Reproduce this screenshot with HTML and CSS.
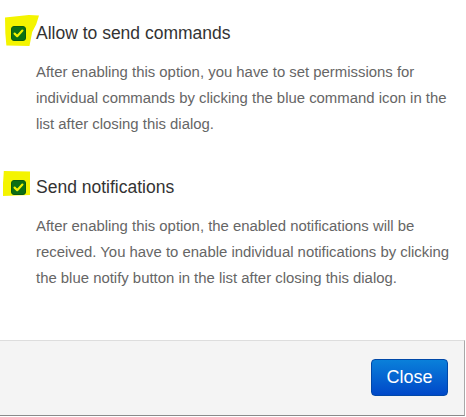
FILE: index.html
```html
<!DOCTYPE html>
<html>
<head>
<meta charset="utf-8">
<link rel="stylesheet" href="styles.css">
</head>
<body>
<div class="dialog">
  <div class="content">
    <div class="section">
      <label class="title">
        <span class="mark mark-a"></span>
        <span class="check"><svg viewBox="0 0 15 15" width="15" height="15"><path d="M3.6 7.6 L6.2 10.2 L11.4 4.6" fill="none" stroke="#f2f200" stroke-width="2.2" stroke-linecap="round" stroke-linejoin="round"/></svg></span>
        <span class="label">Allow to send commands</span>
      </label>
      <p class="desc">After enabling this option, you have to set permissions for individual commands by clicking the blue command icon in the list after closing this dialog.</p>
    </div>
    <div class="section">
      <label class="title">
        <span class="mark mark-b"></span>
        <span class="check"><svg viewBox="0 0 15 15" width="15" height="15"><path d="M3.6 7.6 L6.2 10.2 L11.4 4.6" fill="none" stroke="#f2f200" stroke-width="2.2" stroke-linecap="round" stroke-linejoin="round"/></svg></span>
        <span class="label">Send notifications</span>
      </label>
      <p class="desc">After enabling this option, the enabled notifications will be received. You have to enable individual notifications by clicking the blue notify button in the list after closing this dialog.</p>
    </div>
  </div>
  <div class="footer">
    <button class="close">Close</button>
  </div>
</div>
</body>
</html>
```
FILE: styles.css
```css
html, body {
  margin: 0;
  padding: 0;
  background: #ffffff;
}
body {
  font-family: "Liberation Sans", Arial, sans-serif;
  width: 466px;
  height: 417px;
  overflow: hidden;
}
.dialog {
  display: flex;
  flex-direction: column;
}
.content {
  padding: 20px 10px 49px 11px;
  display: flex;
  flex-direction: column;
  gap: 37px;
}
.section {
  display: flex;
  flex-direction: column;
}
.title {
  position: relative;
  display: flex;
  align-items: center;
  gap: 10px;
  height: 26px;
  font-size: 17.5px;
  line-height: 26px;
  color: #333333;
}
.mark {
  position: absolute;
  background: #f4f400;
  z-index: 0;
}
.mark-a {
  left: -6px;
  top: -5px;
  width: 34px;
  height: 31px;
  clip-path: polygon(0 8%, 70% 0, 100% 2%, 92% 30%, 80% 55%, 72% 100%, 4% 98%, 1% 60%);
}
.mark-b {
  left: -8px;
  top: -3px;
  width: 27px;
  height: 25px;
  clip-path: polygon(3% 0, 100% 2%, 100% 96%, 0 100%, 0 50%);
}
.check {
  position: relative;
  z-index: 1;
  width: 15px;
  height: 15px;
  box-sizing: border-box;
  background: #0c6f14;
  border: 1px solid #0a5a10;
  border-radius: 3px;
  display: flex;
  align-items: center;
  justify-content: center;
}
.check svg {
  display: block;
  margin: -1px;
}
.label {
  position: relative;
  z-index: 1;
}
.desc {
  margin: 13px 0 0 25px;
  font-size: 14.9px;
  line-height: 26px;
  color: #666666;
}
.footer {
  box-sizing: border-box;
  width: 465px;
  height: 76px;
  background: #f4f4f4;
  border-top: 1px solid #dddddd;
  border-right: 1px solid #a8a8a8;
  border-bottom: 1px solid #8a8a8a;
  display: flex;
  justify-content: flex-end;
  align-items: flex-start;
  padding: 18px 16px 0 0;
}
.close {
  width: 77px;
  height: 37px;
  box-sizing: border-box;
  border: 1px solid #0048a8;
  border-radius: 4px;
  background: linear-gradient(#0a80da, #0048c8);
  color: #ffffff;
  font-family: "Liberation Sans", Arial, sans-serif;
  font-size: 18px;
  padding: 0;
  line-height: 35px;
}
```
